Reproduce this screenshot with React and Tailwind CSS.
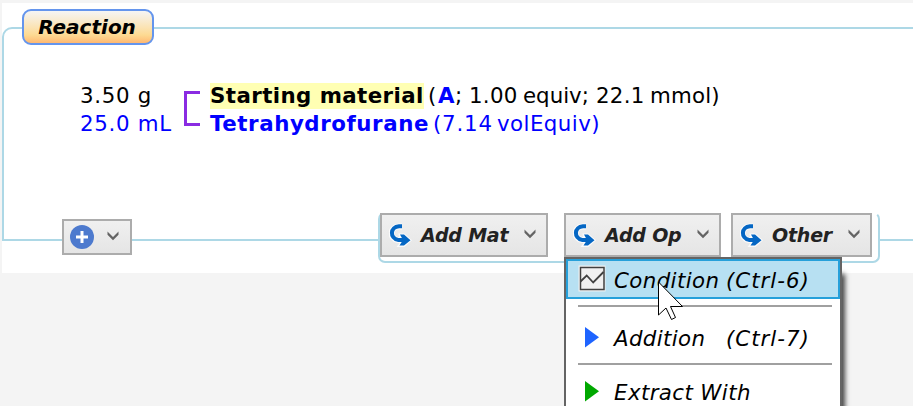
const font = "font-['DejaVu_Sans',Verdana,sans-serif]";

function Chevron() {
  return (
    <svg width="12" height="10" viewBox="0 0 12 10" className="shrink-0">
      <path d="M0.5 0.5 L6 6 L11.5 0.5 V3.8 L6 9.2 L0.5 3.8 Z" fill="#646464" />
    </svg>
  );
}

function TurnArrow() {
  return (
    <svg width="24" height="24" viewBox="0 0 24 24" className="shrink-0">
      <path d="M13 3.5 H10 C0.5 4 0 15.5 9 17 H15" fill="none" stroke="#fff" strokeWidth="6" opacity="0.8" />
      <path d="M10.5 11.5 H15 L21.5 17.3 L15 23 H9.5 L12.5 19 Z" fill="#fff" stroke="#fff" strokeWidth="2" opacity="0.8" />
      <path d="M13 3.3 H10 C1 4 0.5 15 9 16.9 H15" fill="none" stroke="#0567c4" strokeWidth="4" />
      <path d="M11 11.5 H15 L21.5 17.3 L15 22.5 H10.5 L14 17 Z" fill="#0567c4" />
    </svg>
  );
}

function ToolButton({ label, width, textWidth, spacing }) {
  return (
    <button className={`${width} flex h-11 shrink-0 items-center border-2 border-[#acacac] bg-linear-to-b from-[#f0f0f0] to-[#e5e5e5] pl-[7px] text-[#222]`}>
      <TurnArrow />
      <span className={`${textWidth} ${spacing} ml-2 shrink-0 whitespace-nowrap text-left text-[19px] font-bold italic leading-10`}>{label}</span>
      <span className="-mt-[2px]"><Chevron /></span>
    </button>
  );
}

function Play({ color }) {
  return (
    <svg width="14" height="21" viewBox="0 0 14 21" className="ml-[7px] mr-[15px] shrink-0">
      <path d="M0 0 L14 10.3 L0 20.6 Z" fill={color} />
    </svg>
  );
}

export default function App() {
  return (
    <div className={`${font} relative h-[406px] w-[913px] overflow-hidden bg-[#f4f4f4] pl-[2px] pt-[3px] text-[21.33px] leading-7 text-black`}>
      <main className="h-[270px] bg-white pt-6">
        <section className="relative -mr-4 h-[214px] rounded-tl-[10px] border-2 border-[#add8e6] pl-[76px] pt-[53px]">
          <h1 className="absolute left-[18px] -top-5 flex h-9 w-[132px] items-center justify-center rounded-[9px] border-2 border-[#6495ed] bg-linear-to-b from-[#f5f5f5] via-[#fdda92] via-75% to-[#ffb871] text-[20px] font-bold italic">
            <span className="-ml-[2px]">Reaction</span>
          </h1>
          <div className="flex">
            <div className="w-[104px] whitespace-nowrap tracking-[0.7px]">
              <div>3.50 g</div>
              <div className="text-[#0000ff]">25.0 mL</div>
            </div>
            <div className="mt-[9px] h-[35px] w-4 border-3 border-r-0 border-[#8a2be2]" />
            <div className="ml-[10px] whitespace-nowrap">
              <div className="flex h-7 items-center">
                <b className="h-[26px] w-[214px] bg-[#ffffb3] leading-[25px] tracking-[0.42px]">Starting material</b>
                <span className="ml-1 w-[10px]">(</span>
                <b className="w-[17px] text-[#0000ff]">A</b>
                <span className="w-[14px]">;</span>
                <span className="w-[54px] tracking-[0.3px]">1.00</span>
                <span className="w-[73px]">equiv;</span>
                <span className="w-[54px] tracking-[0.3px]">22.1</span>
                <span className="tracking-[0.2px]">mmol)</span>
              </div>
              <div className="flex h-7 text-[#0000ff]">
                <b className="w-[223px] tracking-[0.57px]">Tetrahydrofurane</b>
                <span className="w-[64px] tracking-[0.8px]">(7.14</span>
                <span className="tracking-[0.45px]">volEquiv)</span>
              </div>
            </div>
          </div>
          <button className="absolute left-[58px] top-[190px] flex h-9 w-[70px] items-center border-2 border-[#acacac] bg-linear-to-b from-[#f0f0f0] to-[#e5e5e5] pl-[6px]">
            <svg width="24" height="24" viewBox="0 0 24 24" className="mr-[13px]">
              <circle cx="12" cy="12" r="12" fill="#4d7ace" />
              <path d="M12 6 V18 M6 12 H18" stroke="#fff" strokeWidth="3" />
            </svg>
            <span className="-mt-[3px]"><Chevron /></span>
          </button>
          <div className="absolute left-[374px] top-[183px] flex h-[51px] w-[502px] rounded-[7px] border-2 border-[#add8e6] border-t-transparent bg-white bg-clip-border">
            <div className="-mt-px flex">
              <ToolButton label="Add Mat" width="w-[168px]" textWidth="w-[103px]" spacing="tracking-[-0.2px]" />
              <div className="w-4" />
              <ToolButton label="Add Op" width="w-[157px]" textWidth="w-[92px]" spacing="tracking-[-0.2px]" />
              <div className="w-[10px]" />
              <ToolButton label="Other" width="w-[141px]" textWidth="w-[76px]" spacing="tracking-[-0.2px]" />
            </div>
          </div>
        </section>
      </main>
      <div className="absolute left-[572px] top-[275px] h-[160px] w-[270px] shadow-[2px_0_5px_1px_#444]" />
      <nav className="absolute left-[564px] top-[257px] h-[170px] w-[278px] border-2 border-[#646464] bg-white italic whitespace-pre">
        <div className="flex h-10 items-center border-2 border-[#26a0da] bg-[#b7e0f2] pl-[10px]">
          <svg width="28" height="27" viewBox="0 0 28 27" className="-mt-px mr-[8px] shrink-0">
            <rect x="0.5" y="0.5" width="27" height="26" fill="#f0f0f0" />
            <rect x="2.5" y="2.5" width="23.5" height="22" fill="#f0f0f0" stroke="#404040" strokeWidth="1.5" />
            <path d="M2.5 16.5 L8.7 10.5 L15.2 17.5 L25.5 7" fill="none" stroke="#404040" strokeWidth="1.8" />
          </svg>
          <span className="w-[112px] pt-[3px] tracking-[0.4px]">Condition</span>
          <span className="pt-[3px] tracking-[1px]">(Ctrl-6)</span>
        </div>
        <div className="ml-3 mt-[6px] h-[2px] w-[254px] bg-[#a0a0a0]" />
        <div className="ml-3 flex h-14 items-center pt-[4px]">
          <Play color="#1e64ff" />
          <span className="w-[112px] pt-[3px] tracking-[0.35px]">Addition</span>
          <span className="pt-[3px] tracking-[1px]">(Ctrl-7)</span>
        </div>
        <div className="ml-3 h-[2px] w-[254px] bg-[#a0a0a0]" />
        <div className="ml-3 flex h-[52px] items-center">
          <Play color="#00a800" />
          <span className="pt-[3px] tracking-[0.4px]">Extract With</span>
        </div>
      </nav>
      <svg className="absolute left-[658px] top-[281px]" width="26" height="40" viewBox="0 0 26 40">
        <path d="M0.5 1 V34 L8 27 L13.5 38.5 L17.5 36.5 L12.5 25.5 H24.5 Z" fill="#fff" stroke="#000" />
      </svg>
    </div>
  );
}
